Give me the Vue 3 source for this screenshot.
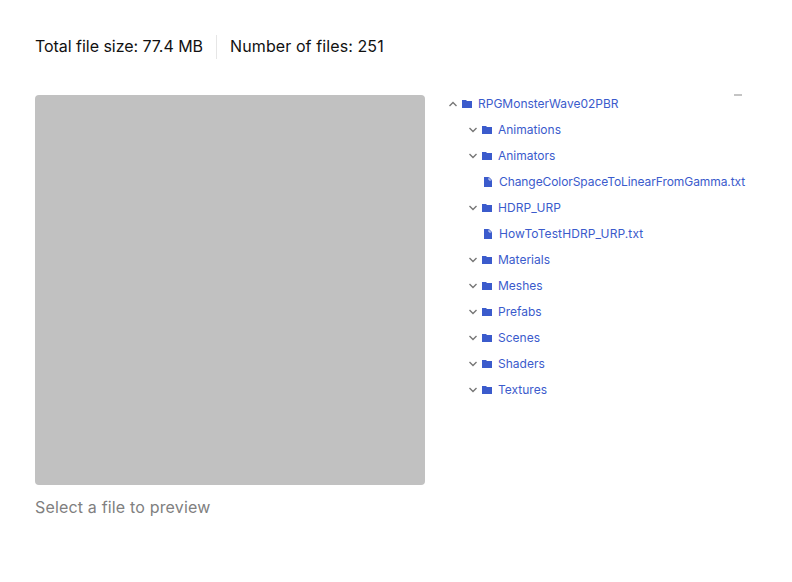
<script setup>
const nodes = [
  { name: 'Animations', type: 'dir' },
  { name: 'Animators', type: 'dir' },
  { name: 'ChangeColorSpaceToLinearFromGamma.txt', type: 'file', fit: 'tight' },
  { name: 'HDRP_URP', type: 'dir', fit: 'wide' },
  { name: 'HowToTestHDRP_URP.txt', type: 'file', fit: 'wide' },
  { name: 'Materials', type: 'dir' },
  { name: 'Meshes', type: 'dir' },
  { name: 'Prefabs', type: 'dir' },
  { name: 'Scenes', type: 'dir' },
  { name: 'Shaders', type: 'dir' },
  { name: 'Textures', type: 'dir' }
]
</script>

<template>
  <div class="page">
    <div class="stats">
      <span class="stat size">Total file size: 77.4 MB</span>
      <span class="divider"></span>
      <span class="stat count">Number of files: 251</span>
    </div>
    <div class="main">
      <div class="left">
        <div class="preview"></div>
        <p class="hint">Select a file to preview</p>
      </div>
      <div class="tree">
        <span class="collapse"></span>
        <div class="row root">
          <svg class="chev" width="8" height="6" viewBox="0 0 8 6"><path d="M.5 5L4 1.5 7.5 5" fill="none" stroke="#777" stroke-width="1.4"/></svg>
          <svg class="folder" width="10" height="8" viewBox="0 0 10 8"><path d="M0 0h4l1 1h5v7H0z" fill="#3b5bcc"/></svg>
          <span class="label">RPGMonsterWave02PBR</span>
        </div>
        <div v-for="n in nodes" :key="n.name" class="row child">
          <template v-if="n.type === 'dir'">
            <svg class="chev" width="8" height="6" viewBox="0 0 8 6"><path d="M.5 1L4 4.5 7.5 1" fill="none" stroke="#777" stroke-width="1.4"/></svg>
            <svg class="folder" width="10" height="8" viewBox="0 0 10 8"><path d="M0 0h4l1 1h5v7H0z" fill="#3b5bcc"/></svg>
          </template>
          <svg v-else class="doc" width="8" height="10" viewBox="0 0 8 10"><path d="M0 0h5l3 3v7H0z" fill="#3b5bcc"/><path d="M5 .6V3h2.4" fill="none" stroke="#fff" stroke-width=".8"/></svg>
          <span class="label" :class="n.fit">{{ n.name }}</span>
        </div>
      </div>
    </div>
  </div>
</template>

<style scoped>
.page {
  width: 792px;
  height: 582px;
  box-sizing: border-box;
  padding: 34px 0 0 35px;
  font-family: Inter, "Liberation Sans", sans-serif;
  background: #fff;
  overflow: hidden;
}
.stats {
  display: flex;
  height: 25px;
  align-items: center;
  font-size: 16px;
  color: #111;
}
.stat {
  margin-bottom: 2px;
}
.size {
  letter-spacing: -0.04px;
}
.count {
  letter-spacing: 0.1px;
}
.divider {
  width: 1px;
  height: 24px;
  margin: 0 13px;
  background: #e6e6e6;
}
.main {
  display: flex;
  margin-top: 36px;
}
.left {
  width: 390px;
}
.preview {
  width: 390px;
  height: 390px;
  background: #c1c1c1;
  border-radius: 4px;
}
.hint {
  margin: 12px 0 0;
  font-size: 16px;
  line-height: 20px;
  letter-spacing: 0.17px;
  color: #808080;
}
.tree {
  position: relative;
  width: 320px;
  margin-left: 23px;
  font-size: 12px;
  color: #3b5bcc;
}
.collapse {
  position: absolute;
  left: 286px;
  top: -1px;
  width: 8px;
  height: 2px;
  background: #c4c4c4;
}
.row {
  display: flex;
  align-items: center;
  height: 26px;
  white-space: nowrap;
}
.root {
  height: 18px;
  margin-bottom: 4px;
}
.child {
  padding-left: 20px;
}
.label {
  margin-bottom: 2px;
}
.tight {
  letter-spacing: -0.08px;
}
.wide {
  letter-spacing: 0.1px;
}
.chev {
  margin-left: 1px;
  flex: none;
}
.folder {
  margin-left: 5px;
  flex: none;
}
.folder + .label {
  margin-left: 6px;
}
.doc {
  margin-left: 16px;
  flex: none;
}
.doc + .label {
  margin-left: 7px;
}
</style>
